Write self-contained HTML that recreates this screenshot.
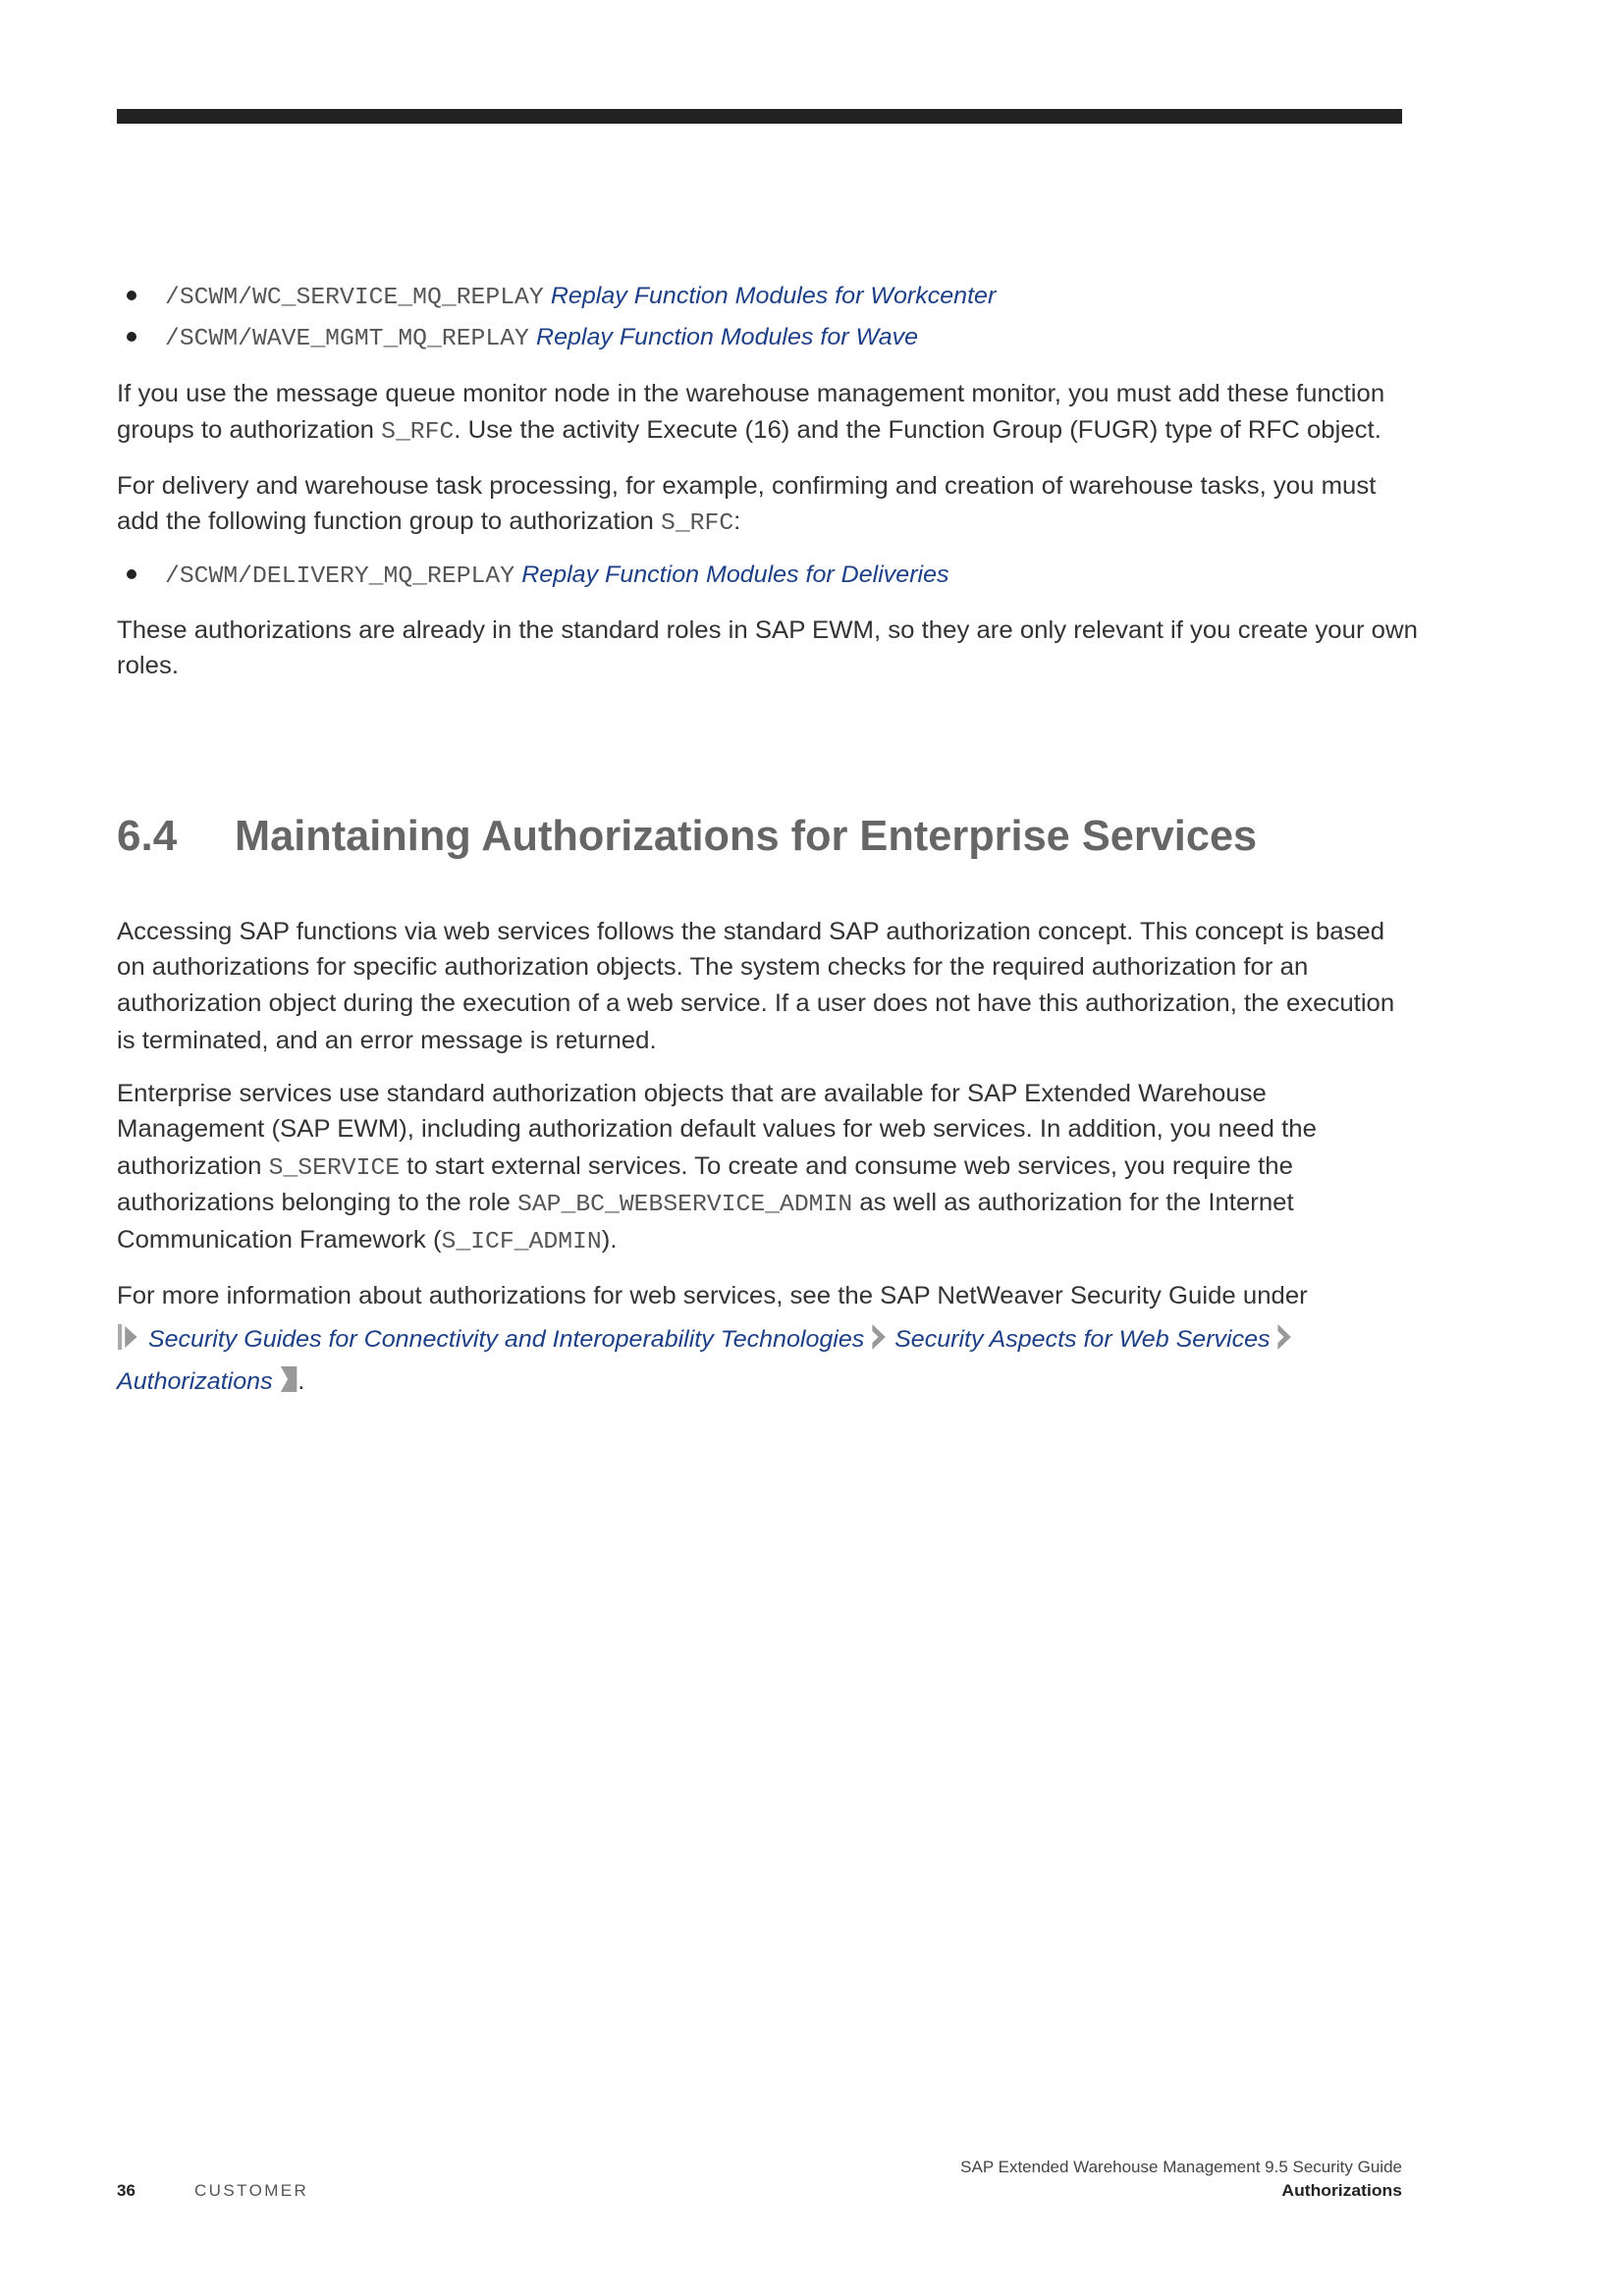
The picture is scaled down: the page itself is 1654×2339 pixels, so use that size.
<!DOCTYPE html>
<html><head><meta charset="utf-8"><style>
html,body{margin:0;padding:0;background:#fff}
body{width:1654px;height:2339px;position:relative;overflow:hidden;font-family:"Liberation Sans",sans-serif;color:#333}
.l{position:absolute;left:119px;white-space:nowrap;font-size:25px;line-height:36px;transform:scaleX(1.03);transform-origin:0 50%}
.m{font-family:"Liberation Mono",monospace;font-size:24px;color:#555}
.a{color:#1c3f87;font-style:italic;font-size:24.3px}
.dot{position:absolute;left:129px;width:10px;height:10px;border-radius:50%;background:#222}
svg{vertical-align:-5px}
</style></head><body>
<div style="position:absolute;left:119px;top:111px;width:1309px;height:15px;background:#222"></div>

<div class="dot" style="top:296px"></div>
<div class="l" style="left:168px;top:283px"><span class="m">/SCWM/WC_SERVICE_MQ_REPLAY</span> <span class="a">Replay Function Modules for Workcenter</span></div>
<div class="dot" style="top:338px"></div>
<div class="l" style="left:168px;top:325px"><span class="m">/SCWM/WAVE_MGMT_MQ_REPLAY</span> <span class="a">Replay Function Modules for Wave</span></div>

<div class="l" style="top:383px">If you use the message queue monitor node in the warehouse management monitor, you must add these function</div>
<div class="l" style="top:420px">groups to authorization <span class="m">S_RFC</span>. Use the activity Execute (16) and the Function Group (FUGR) type of RFC object.</div>

<div class="l" style="top:477px">For delivery and warehouse task processing, for example, confirming and creation of warehouse tasks, you must</div>
<div class="l" style="top:513px">add the following function group to authorization <span class="m">S_RFC</span>:</div>

<div class="dot" style="top:580px"></div>
<div class="l" style="left:168px;top:567px"><span class="m">/SCWM/DELIVERY_MQ_REPLAY</span> <span class="a">Replay Function Modules for Deliveries</span></div>

<div class="l" style="top:624px">These authorizations are already in the standard roles in SAP EWM, so they are only relevant if you create your own</div>
<div class="l" style="top:660px">roles.</div>

<div style="position:absolute;left:119px;top:826px;font-size:44px;line-height:52px;font-weight:bold;color:#666;white-space:nowrap">6.4</div>
<div style="position:absolute;left:239px;top:826px;font-size:44px;line-height:52px;font-weight:bold;color:#666;white-space:nowrap;transform:scaleX(0.985);transform-origin:0 50%">Maintaining Authorizations for Enterprise Services</div>

<div class="l" style="top:931px">Accessing SAP functions via web services follows the standard SAP authorization concept. This concept is based</div>
<div class="l" style="top:967px">on authorizations for specific authorization objects. The system checks for the required authorization for an</div>
<div class="l" style="top:1004px">authorization object during the execution of a web service. If a user does not have this authorization, the execution</div>
<div class="l" style="top:1042px">is terminated, and an error message is returned.</div>

<div class="l" style="top:1096px">Enterprise services use standard authorization objects that are available for SAP Extended Warehouse</div>
<div class="l" style="top:1132px">Management (SAP EWM), including authorization default values for web services. In addition, you need the</div>
<div class="l" style="top:1170px">authorization <span class="m">S_SERVICE</span> to start external services. To create and consume web services, you require the</div>
<div class="l" style="top:1207px">authorizations belonging to the role <span class="m">SAP_BC_WEBSERVICE_ADMIN</span> as well as authorization for the Internet</div>
<div class="l" style="top:1245px">Communication Framework (<span class="m">S_ICF_ADMIN</span>).</div>

<div class="l" style="top:1302px">For more information about authorizations for web services, see the SAP NetWeaver Security Guide under</div>
<div class="l" style="top:1346px"><svg width="24" height="30" viewBox="0 0 24 30"><rect x="1" y="2" width="4" height="26" fill="#aaa"/><path d="M8 4 L20 15 L8 26 Z" fill="#999"/></svg> <span class="a">Security Guides for Connectivity and Interoperability Technologies</span> <svg width="16" height="30" viewBox="0 0 16 30"><path d="M1 2 L14 15 L1 28 L1 21 L7 15 L1 9 Z" fill="#999"/></svg> <span class="a">Security Aspects for Web Services</span> <svg width="16" height="30" viewBox="0 0 16 30"><path d="M1 2 L14 15 L1 28 L1 21 L7 15 L1 9 Z" fill="#999"/></svg></div>
<div class="l" style="top:1389px"><span class="a">Authorizations</span> <svg width="18" height="30" viewBox="0 0 18 30"><path d="M1 2 L17 2 L17 28 L1 28 L8 15 Z" fill="#999"/></svg>.</div>

<div style="position:absolute;right:226px;top:2198px;font-size:17px;color:#444;white-space:nowrap">SAP Extended Warehouse Management 9.5 Security Guide</div>
<div style="position:absolute;left:119px;top:2222px;font-size:17px;font-weight:bold;color:#222">36</div>
<div style="position:absolute;left:198px;top:2222px;font-size:17px;color:#555;letter-spacing:2.4px">CUSTOMER</div>
<div style="position:absolute;right:226px;top:2222px;font-size:17px;font-weight:bold;color:#222;white-space:nowrap;transform:scaleX(1.03);transform-origin:100% 50%">Authorizations</div>
</body></html>
